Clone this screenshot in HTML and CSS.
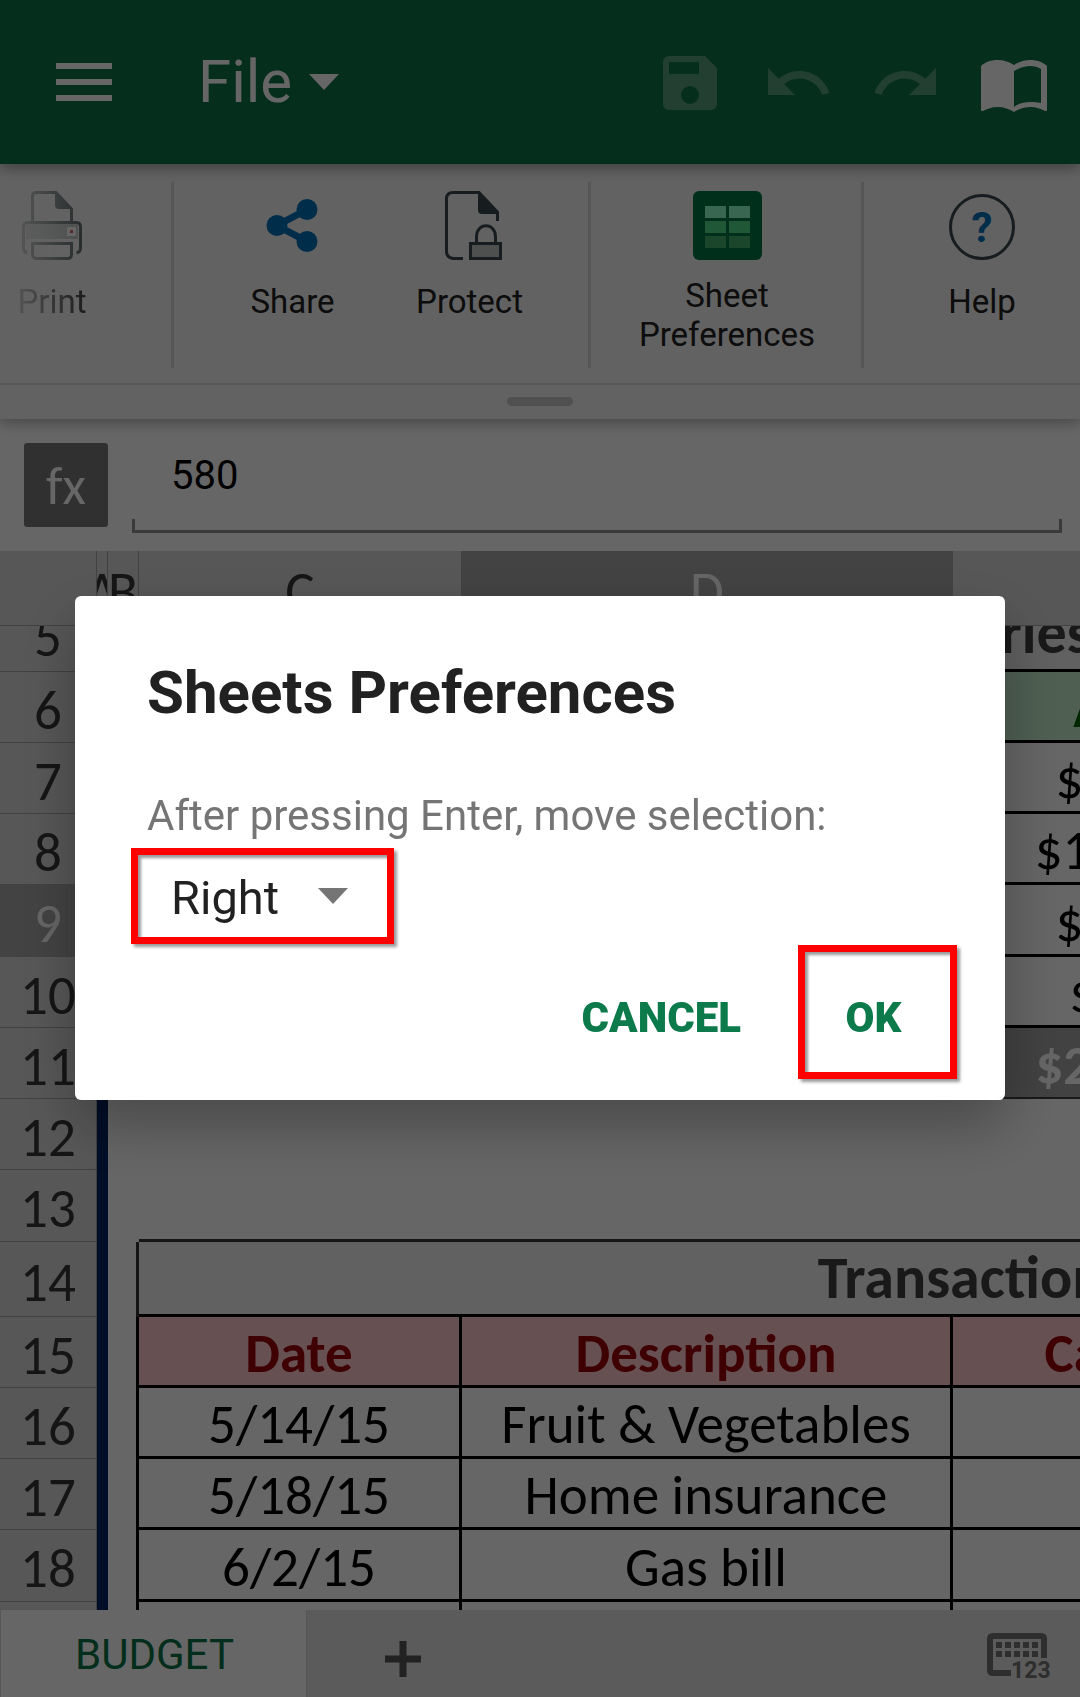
FILE: index.html
```html
<!DOCTYPE html>
<html lang="en">
<head>
<meta charset="utf-8">
<meta name="viewport" content="width=device-width, initial-scale=1">
<title>Budget – Sheets Preferences</title>
<link rel="stylesheet" href="styles.css">
</head>
<body>
<div class="app">
  <header class="appbar">
    <button class="icon-button" aria-label="Menu">
      <svg width="56" height="38" viewBox="0 0 56 38" fill="#fff"><path d="M0 0h56v6H0zM0 16h56v6H0zM0 32h56v6H0z"/></svg>
    </button>
    <button class="file-menu">File
      <svg width="30" height="16" viewBox="0 0 30 16" fill="#fff"><path d="M0 0h30L15 16z"/></svg>
    </button>
    <div class="appbar-actions">
      <button class="icon-button is-disabled" aria-label="Save" disabled>
        <svg width="72" height="72" viewBox="0 0 24 24" fill="#fff"><path fill-rule="evenodd" d="M17 3H5a2 2 0 0 0-2 2v14a2 2 0 0 0 2 2h14a2 2 0 0 0 2-2V7zM12 19a3 3 0 1 1 0-6 3 3 0 0 1 0 6zM15 9H5V5h10z"/></svg>
      </button>
      <button class="icon-button is-disabled" aria-label="Undo" disabled>
        <svg width="72" height="72" viewBox="0 0 24 24" fill="#fff"><path d="M12.500 8c-2.650 0-5.050.99-6.900 2.600L2 7v9h9l-3.620-3.620c1.390-1.160 3.160-1.880 5.120-1.880 3.540 0 6.550 2.310 7.600 5.500l2.370-.78C21.080 11.030 17.150 8 12.500 8z"/></svg>
      </button>
      <button class="icon-button is-disabled" aria-label="Redo" disabled>
        <svg width="72" height="72" viewBox="0 0 24 24" fill="#fff"><path d="M18.400 10.600C16.550 8.990 14.150 8 11.500 8c-4.650 0-8.580 3.030-9.960 7.220L3.900 16c1.050-3.190 4.050-5.500 7.600-5.500 1.950 0 3.730.72 5.120 1.880L13 16h9V7z"/></svg>
      </button>
      <button class="icon-button" aria-label="Reading view">
        <svg width="66" height="58" viewBox="0 -6 66 58" fill="#fff"><path fill-rule="evenodd" d="M0 6C4 2 10 0 16.500 0S29 2 33 5C37 2 43 0 49.500 0S62 2 66 6v44c0 1-1 1-2 1-4-2-9-4-14.500-4-6 0-12 2-16.500 5-4.500-3-10-5-16.500-5C11 47 6 49 2 51c-1 0-2 0-2-1zM33 11v36c5-4 11-5 16.500-5 4 0 7 0 10.500 1V9c-3-2-7-3-10.500-3C44 6 38 8 33 11z"/></svg>
      </button>
    </div>
  </header>

  <nav class="ribbon" aria-label="File tools">
    <div class="ribbon-strip">
      <div class="ribbon-group group-print">
        <button class="tool">
          <svg width="60" height="69" viewBox="0 0 60 69" fill="none" stroke="#3f4d50" stroke-width="3">
            <path d="M10.500 30V5q0-3.500 4-3.500H34L49.500 18v12"/><path d="M33 1l17 17H37q-4 0-4-4z" fill="#3f4d50" stroke="none"/>
            <path d="M5 62q-3.500-1-3.500-5V36q0-4.500 4-4.500h49q4 0 4 4.500v21q0 4-4 5" /><path d="M4 33h52v15H4z" fill="#b8bcbc" stroke="none"/>
            <path d="M45 36h9v9h-9z" fill="#fff" stroke="none"/><path d="M48 39h3v3h-3z" fill="#d8262a" stroke="none"/>
            <path d="M10.500 52.500h39V63q0 4.500-4 4.500h-31q-4 0-4-4.500z" fill="#f8f8f8"/>
          </svg>
          <span class="tool-label">Print</span>
        </button>
      </div>
      <div class="ribbon-group group-share">
        <button class="tool">
          <svg width="54" height="69" viewBox="0 0 54 69" fill="#0070b8"><path d="M41 18.500 11 34.500l30 16" fill="none" stroke="#0070b8" stroke-width="7"/><circle cx="11" cy="34.500" r="10.500"/><circle cx="41" cy="18.500" r="10.500"/><circle cx="41" cy="50.500" r="10.500"/></svg>
          <span class="tool-label">Share</span>
        </button>
        <button class="tool">
          <svg width="64" height="69" viewBox="-7 0 64 69" fill="none" stroke="#3a484c" stroke-width="3">
            <path d="M18 67.500H8q-6.500-1-6.500-7V8q0-6.500 6.500-6.500h26L52.500 21v9"/><path d="M33 1l20 22H37q-4 0-4-4z" fill="#3a484c" stroke="none"/>
            <path d="M31.500 52v-6c0-15 19-15 19 0v6"/><path d="M25.500 52.500h30v15h-30z" fill="#c4c8c9"/>
          </svg>
          <span class="tool-label">Protect</span>
        </button>
      </div>
      <div class="ribbon-group group-sheet">
        <button class="tool">
          <svg width="69" height="69" viewBox="0 0 69 69"><rect width="69" height="69" rx="6" fill="#007846"/><path d="M12 15h21v12H12zM36 15h21v12H36z" fill="#8cffc8"/><path d="M12 30h21v12H12zM36 30h21v12H36z" fill="#50dc8a"/><path d="M12 45h21v12H12zM36 45h21v12H36z" fill="#48b06c"/></svg>
          <span class="tool-label tool-label-wrapped">Sheet<br>Preferences</span>
        </button>
      </div>
      <div class="ribbon-group group-help">
        <button class="tool">
          <svg width="66" height="69" viewBox="0 0 66 69"><circle cx="33" cy="36" r="31.500" fill="none" stroke="#3a484c" stroke-width="3"/><text x="33" y="51" class="help-mark">?</text></svg>
          <span class="tool-label">Help</span>
        </button>
      </div>
    </div>
    <div class="ribbon-grip"><span></span></div>
  </nav>

  <div class="formula-bar">
    <button class="fx">fx</button>
    <div class="formula-field">
      <input type="text" value="580" aria-label="Cell value">
      <div class="formula-bracket"></div>
    </div>
  </div>

  <main class="sheet">
    <table class="grid grid-head">
      <colgroup><col class="col-n"><col class="col-a"><col class="col-b"><col class="col-c"><col class="col-d"><col class="col-e"><col class="col-f"></colgroup>
      <tr><th></th><th><span class="narrow">A</span></th><th><span class="narrow">B</span></th><th>C</th><th class="is-selected">D</th><th>E</th><th>F</th></tr>
    </table>
    <div class="sheet-body">
      <table class="grid grid-body">
        <colgroup><col class="col-n"><col class="col-a"><col class="col-b"><col class="col-c"><col class="col-d"><col class="col-e"><col class="col-f"></colgroup>
        <tr class="row-title"><th>5</th><td class="navy"></td><td class="edge"></td><td colspan="4" class="title title-categories">Categories</td></tr>
        <tr><th>6</th><td class="navy"></td><td class="edge"></td><td class="good"></td><td class="good"></td><td class="good">Actual</td><td class="good"></td></tr>
        <tr><th>7</th><td class="navy"></td><td class="edge"></td><td class="cell"></td><td class="cell"></td><td class="cell">$580.00</td><td class="cell"></td></tr>
        <tr><th>8</th><td class="navy"></td><td class="edge"></td><td class="cell"></td><td class="cell"></td><td class="cell">$1,200.00</td><td class="cell"></td></tr>
        <tr class="row-tall"><th class="is-selected">9</th><td class="navy"></td><td class="edge"></td><td class="cell"></td><td class="cell">580</td><td class="cell">$580.00</td><td class="cell"></td></tr>
        <tr><th>10</th><td class="navy"></td><td class="edge"></td><td class="cell"></td><td class="cell"></td><td class="cell">$50.00</td><td class="cell"></td></tr>
        <tr><th>11</th><td class="navy"></td><td class="edge"></td><td class="total"></td><td class="total"></td><td class="total">$2,410.00</td><td class="total"></td></tr>
        <tr><th>12</th><td class="navy"></td><td></td><td colspan="4"></td></tr>
        <tr class="row-tall"><th>13</th><td class="navy"></td><td></td><td colspan="4" class="above-title"></td></tr>
        <tr class="row-title"><th>14</th><td class="navy"></td><td class="edge edge-soft"></td><td colspan="4" class="title">Transactions</td></tr>
        <tr><th>15</th><td class="navy"></td><td class="edge"></td><td class="bad">Date</td><td class="bad">Description</td><td class="bad">Category</td><td class="bad">Amount</td></tr>
        <tr><th>16</th><td class="navy"></td><td class="edge"></td><td class="cell">5/14/15</td><td class="cell">Fruit &amp; Vegetables</td><td class="cell"></td><td class="cell"></td></tr>
        <tr><th>17</th><td class="navy"></td><td class="edge"></td><td class="cell">5/18/15</td><td class="cell">Home insurance</td><td class="cell"></td><td class="cell"></td></tr>
        <tr class="row-tall"><th>18</th><td class="navy"></td><td class="edge"></td><td class="cell">6/2/15</td><td class="cell">Gas bill</td><td class="cell"></td><td class="cell"></td></tr>
        <tr><th></th><td class="navy"></td><td class="edge"></td><td class="cell"></td><td class="cell"></td><td class="cell"></td><td class="cell"></td></tr>
      </table>
    </div>
  </main>

  <footer class="tabs">
    <button class="tab">BUDGET</button>
    <button class="icon-button add-sheet" aria-label="Add sheet">
      <svg width="36" height="36" viewBox="0 0 36 36" fill="#555"><path d="M14.500 0h7v14.500H36v7H21.500V36h-7V21.500H0v-7h14.500z"/></svg>
    </button>
    <button class="icon-button keypad" aria-label="Numeric keyboard">
      <svg width="64" height="48" viewBox="0 0 64 48" fill="#737373"><path d="M6 0h48q6 0 6 6v19h-6V6H6v31h18v6H6q-6 0-6-6V6q0-6 6-6z"/><path d="M9 9h6v6H9zM18 9h6v6h-6zM27 9h6v6h-6zM36 9h6v6h-6zM45 9h6v6h-6zM9 18h6v6H9zM18 18h6v6h-6zM27 18h6v6h-6zM36 18h6v6h-6zM45 18h6v6h-6z"/><text x="24" y="45" class="keypad-digits">123</text></svg>
    </button>
  </footer>
</div>

<div class="scrim">
  <form class="dialog" role="dialog" aria-labelledby="dialog-title">
    <h1 id="dialog-title">Sheets Preferences</h1>
    <label for="direction">After pressing Enter, move selection:</label>
    <div class="callout direction">
      <select id="direction"><option>Right</option><option>Down</option><option>Left</option><option>Up</option></select>
      <svg width="30" height="16" viewBox="0 0 30 16" fill="#757575"><path d="M0 0h30L15 16z"/></svg>
    </div>
    <div class="dialog-actions">
      <button type="button" class="dialog-button">CANCEL</button>
      <div class="callout"><button type="button" class="dialog-button dialog-ok">OK</button></div>
    </div>
  </form>
</div>
</body>
</html>
```
FILE: styles.css
```css
* { box-sizing: border-box; }

body {
  margin: 0;
  font-family: Roboto, "Liberation Sans", sans-serif;
  color: #212121;
}

button {
  margin: 0;
  padding: 0;
  border: 0;
  background: none;
  color: inherit;
  font: inherit;
}

svg { display: block; flex: none; }

.app {
  display: flex;
  flex-direction: column;
  height: 100vh;
  overflow: hidden;
  background: #fff;
}

/* Top bar */
.appbar {
  position: relative;
  z-index: 3;
  flex: none;
  display: flex;
  align-items: center;
  height: 164px;
  padding: 0 33px 0 56px;
  background: #0d7346;
  box-shadow: 0 3px 14px rgba(0, 0, 0, .4);
}

.file-menu {
  display: flex;
  align-items: center;
  gap: 17px;
  margin-left: 86px;
  color: #fff;
  font-size: 60px;
  line-height: 72px;
}

.appbar-actions {
  display: flex;
  align-items: center;
  gap: 36px;
  margin-left: auto;
  padding-top: 2px;
}

.is-disabled { opacity: .3; }
.appbar-actions .icon-button:last-child { margin-left: 3px; }

/* Ribbon */
.ribbon {
  position: relative;
  z-index: 2;
  flex: none;
  background: #f5f5f5;
  box-shadow: 0 3px 14px rgba(0, 0, 0, .35);
}

.ribbon-strip {
  display: flex;
  height: 221px;
  padding: 18px 0 15px;
  overflow: hidden;
  border-bottom: 2px solid #dadada;
}

.ribbon-group {
  flex: none;
  display: flex;
  height: 186px;
  border-right: 3px solid #d8d8d8;
}

.group-print { width: 174px; }
.group-print .tool { width: 104px; mask-image: linear-gradient(90deg, transparent, #000); }
.group-share { width: 417px; padding: 0 30px; }
.group-share .tool { flex: 1; }
.group-sheet { width: 273px; }
.group-sheet .tool { flex: 1; padding-left: 2px; }
.group-help { border: 0; }
.group-help .tool { width: 236px; }

.tool {
  display: flex;
  flex-direction: column;
  align-items: center;
  padding-top: 9px;
}

.tool-label {
  margin-top: 22px;
  font-size: 33px;
  line-height: 39px;
}

.tool-label-wrapped { margin-top: 16px; }

.help-mark {
  font: 700 42px Roboto, sans-serif;
  fill: #0070b8;
  text-anchor: middle;
}

.ribbon-grip {
  display: flex;
  justify-content: center;
  height: 34px;
  padding-top: 12px;
}

.ribbon-grip span {
  width: 66px;
  height: 9px;
  border-radius: 5px;
  background: #c8c8c8;
}

/* Formula bar */
.formula-bar {
  flex: none;
  display: flex;
  gap: 24px;
  height: 132px;
  padding: 24px 18px 18px 24px;
}

.fx {
  width: 84px;
  height: 84px;
  padding-top: 2px;
  border-radius: 3px;
  background: #787878;
  color: #fff;
  font: 54px/82px Carlito, "Noto Sans", sans-serif;
}

.formula-field {
  flex: 1;
  display: flex;
  flex-direction: column;
  justify-content: space-between;
}

.formula-field input {
  width: 100%;
  height: 64px;
  padding: 0 39px;
  border: 0;
  outline: 0;
  background: none;
  color: #000;
  font: 40px Roboto, sans-serif;
}

.formula-bracket {
  height: 14px;
  border: solid #919191;
  border-width: 0 3px 3px;
}

/* Spreadsheet */
.sheet {
  flex: 1;
  min-height: 0;
  display: flex;
  flex-direction: column;
  overflow: hidden;
  font-family: Carlito, Lato, sans-serif;
  font-size: 55px;
  line-height: 60px;
}

.sheet-body { flex: 1; min-height: 0; overflow: hidden; }

.grid {
  flex: none;
  width: 1810px;
  table-layout: fixed;
  border-collapse: separate;
  border-spacing: 0;
}

.col-n { width: 97px; }
.col-a { width: 11px; }
.col-b { width: 31px; }
.col-c { width: 323px; }
.col-d { width: 491px; }
.col-e { width: 389px; }
.col-f { width: 468px; }

.grid th {
  padding: 7px 0 0;
  overflow: hidden;
  border: solid #a5a5a5;
  border-width: 0 1px 1px 0;
  background: #dadada;
  color: #363636;
  font-weight: 400;
}

.grid th.is-selected {
  border-color: #a8a8a8;
  background: #a8a8a8;
  color: #fff;
}

.grid-head th { height: 75px; }

/* Letters wider than their column stay centred and lose both sides */
.narrow { display: flex; justify-content: center; overflow: hidden; }

/* Row 5 is scrolled partly under the column headings */
.grid-body { margin-top: -29px; }
.grid-body tr { height: 71px; }
.grid-body .row-tall { height: 72px; }
.grid-body .row-title { height: 75px; }

.grid td {
  padding: 6px 0 0;
  text-align: center;
  white-space: nowrap;
  color: #000;
}

.grid .navy { background: #002364; }
.grid .edge { border-right: 3px solid #000; }
.grid .edge-soft { border-color: #363636; }
.grid .above-title { border-bottom: 3px solid #363636; }

.grid .cell,
.grid .good,
.grid .bad,
.grid .title {
  border: solid #000;
  border-width: 0 3px 3px 0;
}

.grid .title {
  padding: 0;
  background: #f2f2f2;
  color: #3f3f3f;
  font-size: 60px;
  font-weight: 700;
}

.grid .title-categories { padding-right: 26px; }

.grid .good { background: #c6efce; color: #006100; font-weight: 700; }
.grid .bad { background: #ffc7ce; color: #9c0006; font-weight: 700; }

.grid .total {
  border-bottom: 2px solid #3f3f3f;
  background: #a5a5a5;
  color: #fff;
  font-weight: 700;
}

/* Sheet tabs */
.tabs {
  flex: none;
  display: flex;
  align-items: center;
  height: 87px;
  padding-right: 29px;
  background: #e4e4e4;
}

.tab {
  width: 307px;
  height: 87px;
  padding: 2px 0 0 2px;
  border: solid #d8d8d8;
  border-width: 0 1px;
  background: #fff;
  color: #0c7347;
  font-size: 42px;
}

.add-sheet { margin: 11px 0 0 78px; }
.keypad { margin-left: auto; padding-top: 6px; }

.keypad-digits { font: 700 23px Roboto, sans-serif; }

/* Dialog */
.scrim {
  position: fixed;
  inset: 0;
  z-index: 10;
  display: flex;
  align-items: center;
  justify-content: center;
  padding: 0 75px 1px;
  background: rgba(0, 0, 0, .6);
}

.dialog {
  display: flex;
  flex-direction: column;
  flex: 1;
  padding: 61px 48px 21px 56px;
  border-radius: 6px;
  background: #fff;
  box-shadow: 0 24px 60px rgba(0, 0, 0, .3);
}

.dialog h1 {
  margin: 0 16px;
  font-size: 60px;
  line-height: 72px;
}

.dialog label {
  margin: 63px 16px 0;
  color: #757575;
  font-size: 42px;
  line-height: 48px;
}

.callout {
  border: 7px solid #f00;
  box-shadow: 3px 3px 3px rgba(0, 0, 0, .4), inset 3px 3px 3px rgba(0, 0, 0, .4);
}

/* The arrow shares the select's grid cell */
.direction {
  display: grid;
  align-self: flex-start;
  align-items: center;
  width: 263px;
  height: 96px;
  margin-top: 8px;
}

.direction > * { grid-area: 1 / 1; }
.direction svg { justify-self: end; margin-right: 39px; pointer-events: none; }

.direction select {
  width: 100%;
  height: 82px;
  padding: 2px 0 0 33px;
  border: 0;
  outline: 0;
  appearance: none;
  background: none;
  color: #212121;
  font: 47px Roboto, sans-serif;
}

.dialog-actions {
  display: flex;
  align-items: center;
  justify-content: flex-end;
  gap: 57px;
  margin-top: 1px;
}

.dialog-button {
  height: 120px;
  padding-top: 10px;
  color: #0c7a4b;
  font-size: 42px;
  font-weight: 900;
}

.dialog-ok { width: 145px; padding-right: 8px; }
```
